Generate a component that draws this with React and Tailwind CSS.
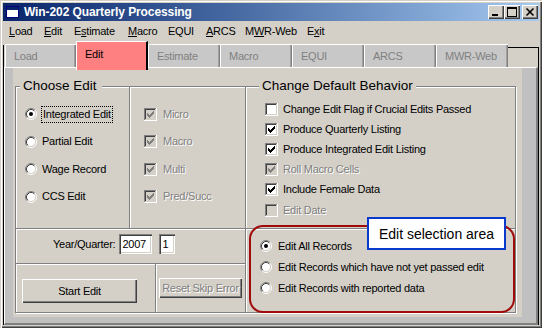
import React from 'react';

const raised = 'bg-[#d4d0c8] shadow-[inset_1px_1px_0_#fff,inset_-1px_-1px_0_#404040,inset_-2px_-2px_0_#808080]';
const sunken = 'bg-white shadow-[inset_1px_1px_0_#808080,inset_2px_2px_0_#404040,inset_-1px_-1px_0_#fff,inset_-2px_-2px_0_#d4d0c8]';
const disabledText = 'text-[#808080] [text-shadow:1px_1px_0_#fff]';

const menuItems = [
  { pre: '', key: 'L', post: 'oad', w: 'w-[35px]' },
  { pre: '', key: 'E', post: 'dit', w: 'w-[30px]' },
  { pre: 'E', key: 's', post: 'timate', w: 'w-[54px]' },
  { pre: '', key: 'M', post: 'acro', w: 'w-[40px]' },
  { pre: 'EQUI', key: '', post: '', w: 'w-[38px]' },
  { pre: '', key: 'A', post: 'RCS', w: 'w-[39px]' },
  { pre: 'M', key: 'W', post: 'R-Web', w: 'w-[62px]' },
  { pre: 'E', key: 'x', post: 'it', w: 'w-[30px]' },
];

const tabs = ['Load', 'Edit', 'Estimate', 'Macro', 'EQUI', 'ARCS', 'MWR-Web'];

// classic 7x7 check mark, pixel rows
const checkPixels = [
  [9, 3, 1], [8, 4, 2], [3, 5, 1], [7, 5, 3], [3, 6, 2], [6, 6, 3], [3, 7, 5], [4, 8, 3], [5, 9, 1],
];

function Checkbox({ checked, disabled }) {
  return (
    <svg width="13" height="13" viewBox="0 0 13 13" className="shrink-0" shapeRendering="crispEdges">
      <rect x="0" y="0" width="13" height="13" fill="#fff" />
      <rect x="0" y="0" width="12" height="12" fill="#808080" />
      <rect x="1" y="1" width="11" height="11" fill="#d4d0c8" />
      <rect x="1" y="1" width="10" height="10" fill="#404040" />
      <rect x="2" y="2" width="9" height="9" fill={disabled ? '#d4d0c8' : '#fff'} />
      {checked &&
        checkPixels.map(([x, y, w]) => (
          <rect key={`${x}-${y}`} x={x} y={y} width={w} height="1" fill={disabled ? '#808080' : '#000'} />
        ))}
    </svg>
  );
}

function Radio({ checked }) {
  return (
    <svg width="12" height="12" viewBox="0 0 12 12" className="shrink-0">
      <circle cx="6" cy="6" r="4.5" fill="#fff" />
      <path d="M2.11 9.89A5.5 5.5 0 0 1 9.89 2.11" fill="none" stroke="#808080" />
      <path d="M9.89 2.11A5.5 5.5 0 0 1 2.11 9.89" fill="none" stroke="#fff" />
      <path d="M2.82 9.18A4.5 4.5 0 0 1 9.18 2.82" fill="none" stroke="#404040" />
      <path d="M9.18 2.82A4.5 4.5 0 0 1 2.82 9.18" fill="none" stroke="#d4d0c8" />
      {checked && <circle cx="6" cy="6" r="2" fill="#000" />}
    </svg>
  );
}

function TitleButton({ children }) {
  return (
    <div className={`flex h-[14px] w-[16px] items-center justify-center ${raised}`}>
      <svg width="16" height="14" viewBox="0 0 16 14" shapeRendering="crispEdges">
        {children}
      </svg>
    </div>
  );
}

function TitleBar() {
  return (
    <div className="flex h-[18px] items-center bg-linear-to-r from-[#0a246a] to-[#a6caf0] pl-[3px] pr-[1px]">
      <div className="flex h-[12px] w-[13px] flex-col border border-[#000080] bg-white">
        <div className="h-[3px] bg-[#0a246a]" />
      </div>
      <span className="ml-[5px] text-[12px] font-bold tracking-[-0.1px] text-white">Win-202 Quarterly Processing</span>
      <div className="ml-auto flex items-center">
        <TitleButton>
          <rect x="4" y="9" width="6" height="2" fill="#000" />
        </TitleButton>
        <TitleButton>
          <rect x="3" y="2" width="9" height="9" fill="none" stroke="#000" strokeWidth="1" transform="translate(0.5 0.5)" />
          <rect x="3" y="2" width="10" height="2" fill="#000" />
        </TitleButton>
        <div className="w-[2px]" />
        <TitleButton>
          <path d="M4.5 3.5l7 7M11.5 3.5l-7 7" stroke="#000" strokeWidth="1.6" shapeRendering="auto" />
        </TitleButton>
      </div>
    </div>
  );
}

function MenuBar() {
  return (
    <div className="flex h-[20px] items-center pl-[6px]">
      {menuItems.map((m) => (
        <span key={m.pre + m.key + m.post} className={`${m.w} shrink-0 whitespace-nowrap`}>
          {m.pre}
          <span className="underline underline-offset-[1px]">{m.key}</span>
          {m.post}
        </span>
      ))}
    </div>
  );
}

function Tabs() {
  return (
    <div className="flex h-[26px] items-start">
      <div className="mt-[4px] h-[22px] w-[1px] bg-black" />
      <div className="w-[1px]" />
      {tabs.map((t, i) =>
        t === 'Edit' ? (
          <div
            key={t}
            className="relative z-10 mt-0 flex h-[29px] w-[72px] items-center border-t border-l border-white border-r-2 border-r-black bg-[#ff8080] pl-[8px] pb-[3px]"
          >
            {t}
          </div>
        ) : (
          <div
            key={t}
            className={`mt-[3px] flex h-[23px] ${i === 0 ? 'w-[71px]' : 'w-[72px]'} items-center border-t border-l border-white bg-[#c8c8c8] pl-[8px] text-[#808080] shadow-[inset_-1px_0_0_#808080,inset_-2px_0_0_#a0a0a0]`}
          >
            {t}
          </div>
        )
      )}
      <div className="mt-[6px] h-[20px] flex-1 border-t border-r border-black" />
    </div>
  );
}

function GroupContent() {
  return (
    <div className="relative ml-[2px] mt-[17px] flex h-[227px] w-[501px] border border-[#808080] shadow-[inset_1px_1px_0_#fff,1px_1px_0_#fff]">
      <span className="absolute left-[4px] top-[-10px] bg-[#d4d0c8] pl-[3px] pr-[5px] text-[13.5px] leading-[17px] tracking-normal">
        Choose Edit
      </span>
      <span className="absolute left-[243px] top-[-10px] bg-[#d4d0c8] px-[3px] text-[13.5px] leading-[17px] tracking-normal">
        Change Default Behavior
      </span>

      {/* left half */}
      <div className="flex w-[230px] flex-col border-r border-[#808080]">
        <div className="flex h-[142px] border-b border-[#808080]">
          <div className="flex w-[114px] flex-col border-r border-[#808080] pl-[9px] pt-[13.5px]">
            {['Integrated Edit', 'Partial Edit', 'Wage Record', 'CCS Edit'].map((label, i) => (
              <div key={label} className="flex h-[27.5px] items-center">
                <Radio checked={i === 0} />
                {i === 0 ? (
                  <span className="ml-[4px] border border-dotted border-black px-[1px] leading-[15px]">{label}</span>
                ) : (
                  <span className="ml-[5px]">{label}</span>
                )}
              </div>
            ))}
          </div>
          <div className="flex flex-1 flex-col pl-[14px] pt-[13.5px] shadow-[inset_1px_0_0_#fff]">
            {['Micro', 'Macro', 'Multi', 'Pred/Succ'].map((label) => (
              <div key={label} className="flex h-[27.5px] items-center">
                <Checkbox checked disabled />
                <span className={`ml-[6px] ${disabledText}`}>{label}</span>
              </div>
            ))}
          </div>
        </div>

        <div className="flex h-[35px] items-start border-b border-[#808080] pl-[37px] pt-[5px] shadow-[inset_0_1px_0_#fff]">
          <span className="flex h-[20px] items-center">Year/Quarter:</span>
          <div className={`ml-[4px] flex h-[20px] w-[33px] items-center pl-[3px] ${sunken}`}>2007</div>
          <div className={`ml-[7px] flex h-[20px] w-[16px] items-center pl-[3px] ${sunken}`}>1</div>
        </div>

        <div className="flex flex-1 shadow-[inset_0_1px_0_#fff]">
          <div className="w-[140px] border-r border-[#808080] pl-[6px] pt-[15px]">
            <button className={`flex h-[24px] w-[115px] items-center justify-center ${raised}`}>Start Edit</button>
          </div>
          <div className="flex-1 pl-[3px] pt-[14px] shadow-[inset_1px_0_0_#fff]">
            <button
              disabled
              className={`flex h-[20px] w-[83px] items-center justify-center overflow-hidden whitespace-nowrap ${raised} ${disabledText}`}
            >
              Reset Skip Error
            </button>
          </div>
        </div>
      </div>

      {/* right half */}
      <div className="flex flex-1 flex-col shadow-[inset_1px_0_0_#fff]">
        <div className="flex h-[142px] flex-col border-b border-[#808080] pl-[19px] pt-[12px]">
          {[
            { label: 'Change Edit Flag if Crucial Edits Passed', checked: false },
            { label: 'Produce Quarterly Listing', checked: true },
            { label: 'Produce Integrated Edit Listing', checked: true },
            { label: 'Roll Macro Cells', checked: true, disabled: true },
            { label: 'Include Female Data', checked: true },
            { label: 'Edit Date', checked: false, disabled: true },
          ].map((c) => (
            <div key={c.label} className="flex h-[20.2px] items-center">
              <Checkbox checked={c.checked} disabled={c.disabled} />
              <span className={`ml-[5px] ${c.disabled ? disabledText : ''}`}>{c.label}</span>
            </div>
          ))}
        </div>
        <div className="flex flex-1 flex-col pl-[14px] pt-[6.5px] shadow-[inset_0_1px_0_#fff]">
          {['Edit All Records', 'Edit Records which have not yet passed edit', 'Edit Records with reported data'].map(
            (label, i) => (
              <div key={label} className="flex h-[21px] items-center">
                <Radio checked={i === 0} />
                <span className="ml-[6px]">{label}</span>
              </div>
            )
          )}
        </div>
      </div>
    </div>
  );
}

export default function App() {
  return (
    <div className="relative h-[328px] w-[542px] overflow-hidden bg-[#d4d0c8] p-[3px] font-['Liberation_Sans',Arial,sans-serif] text-[11px] leading-none tracking-[-0.25px] text-black shadow-[inset_1px_1px_0_#d4d0c8,inset_2px_2px_0_#fff,inset_-1px_-1px_0_#404040,inset_-2px_-2px_0_#808080]">
      <TitleBar />
      <MenuBar />
      <div className="flex h-[284px] flex-col">
        <Tabs />
        <div className="flex-1 border-x border-black">
          <div className="h-full border-t border-l border-white border-r-2 border-r-[#808080] border-b-2 border-b-[#808080] bg-[#c0c0c0] pl-[8px] pr-[14px] pb-[6px]">
            <div className="h-full overflow-hidden bg-[#d4d0c8] pt-px">
              <GroupContent />
            </div>
          </div>
        </div>
      </div>

      {/* annotation overlays */}
      <div className="absolute left-[249px] top-[225px] h-[88px] w-[266px] rounded-[14px] border-2 border-[#a00a0a]" />
      <div className="absolute left-[367px] top-[217px] flex h-[33px] w-[139px] items-center justify-center border-2 border-[#0a3acc] bg-white text-[14px] tracking-normal">
        Edit selection area
      </div>
    </div>
  );
}
